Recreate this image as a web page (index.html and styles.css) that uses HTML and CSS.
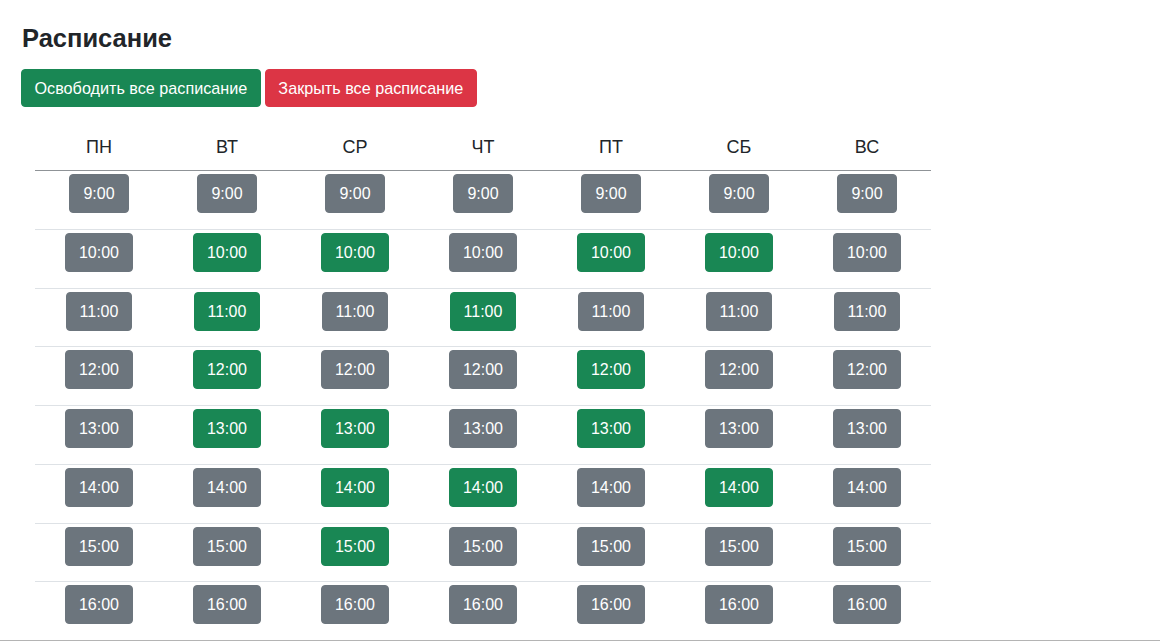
FILE: index.html
```html
<!DOCTYPE html>
<html lang="ru">
<head>
<meta charset="utf-8">
<title>Расписание</title>
<link rel="stylesheet" href="styles.css">
</head>
<body>
<div class="page">
  <h1 class="title">Расписание</h1>
  <div class="actions">
    <button class="btn btn-success">Освободить все расписание</button>
    <button class="btn btn-danger">Закрыть все расписание</button>
  </div>
  <table class="schedule">
    <thead>
      <tr><th>ПН</th><th>ВТ</th><th>СР</th><th>ЧТ</th><th>ПТ</th><th>СБ</th><th>ВС</th></tr>
    </thead>
    <tbody>
      <tr>
        <td><button class="slot">9:00</button></td>
        <td><button class="slot">9:00</button></td>
        <td><button class="slot">9:00</button></td>
        <td><button class="slot">9:00</button></td>
        <td><button class="slot">9:00</button></td>
        <td><button class="slot">9:00</button></td>
        <td><button class="slot">9:00</button></td>
      </tr>
      <tr>
        <td><button class="slot">10:00</button></td>
        <td><button class="slot free">10:00</button></td>
        <td><button class="slot free">10:00</button></td>
        <td><button class="slot">10:00</button></td>
        <td><button class="slot free">10:00</button></td>
        <td><button class="slot free">10:00</button></td>
        <td><button class="slot">10:00</button></td>
      </tr>
      <tr>
        <td><button class="slot">11:00</button></td>
        <td><button class="slot free">11:00</button></td>
        <td><button class="slot">11:00</button></td>
        <td><button class="slot free">11:00</button></td>
        <td><button class="slot">11:00</button></td>
        <td><button class="slot">11:00</button></td>
        <td><button class="slot">11:00</button></td>
      </tr>
      <tr>
        <td><button class="slot">12:00</button></td>
        <td><button class="slot free">12:00</button></td>
        <td><button class="slot">12:00</button></td>
        <td><button class="slot">12:00</button></td>
        <td><button class="slot free">12:00</button></td>
        <td><button class="slot">12:00</button></td>
        <td><button class="slot">12:00</button></td>
      </tr>
      <tr>
        <td><button class="slot">13:00</button></td>
        <td><button class="slot free">13:00</button></td>
        <td><button class="slot free">13:00</button></td>
        <td><button class="slot">13:00</button></td>
        <td><button class="slot free">13:00</button></td>
        <td><button class="slot">13:00</button></td>
        <td><button class="slot">13:00</button></td>
      </tr>
      <tr>
        <td><button class="slot">14:00</button></td>
        <td><button class="slot">14:00</button></td>
        <td><button class="slot free">14:00</button></td>
        <td><button class="slot free">14:00</button></td>
        <td><button class="slot">14:00</button></td>
        <td><button class="slot free">14:00</button></td>
        <td><button class="slot">14:00</button></td>
      </tr>
      <tr>
        <td><button class="slot">15:00</button></td>
        <td><button class="slot">15:00</button></td>
        <td><button class="slot free">15:00</button></td>
        <td><button class="slot">15:00</button></td>
        <td><button class="slot">15:00</button></td>
        <td><button class="slot">15:00</button></td>
        <td><button class="slot">15:00</button></td>
      </tr>
      <tr>
        <td><button class="slot">16:00</button></td>
        <td><button class="slot">16:00</button></td>
        <td><button class="slot">16:00</button></td>
        <td><button class="slot">16:00</button></td>
        <td><button class="slot">16:00</button></td>
        <td><button class="slot">16:00</button></td>
        <td><button class="slot">16:00</button></td>
      </tr>
    </tbody>
  </table>
</div>
<div class="frame-edge"></div>
</body>
</html>
```

FILE: styles.css
```css
* { box-sizing: border-box; }

html, body {
  margin: 0;
  padding: 0;
  background: #fff;
  color: #212529;
  font-family: "Liberation Sans", Arial, sans-serif;
  overflow: hidden;
}

.page {
  padding: 24px 21px 0 21px;
}

.title {
  margin: 0 0 16px 1px;
  font-size: 25.5px;
  line-height: 29px;
  font-weight: 700;
}

.actions {
  display: flex;
  gap: 4px;
}

.btn {
  font-family: inherit;
  font-size: 16.2px;
  line-height: 24px;
  padding: 6px 12.5px;
  border: 1px solid transparent;
  border-radius: 4px;
  color: #fff;
  cursor: pointer;
}

.btn-success { background: #198754; border-color: #198754; }
.btn-danger { background: #dc3545; border-color: #dc3545; }

.schedule {
  margin: 20px 0 0 14px;
  width: 896px;
  border-collapse: collapse;
  table-layout: fixed;
}

.schedule th {
  font-weight: 400;
  font-size: 18px;
  line-height: 27px;
  padding: 7px 4px 9px 4px;
  text-align: center;
  border-bottom: 1px solid #8f9397;
}

.schedule td {
  text-align: center;
  padding: 3px 4px 15.75px 4px;
  border-top: 1px solid #dee2e6;
}

.schedule tbody tr:first-child td {
  border-top: none;
}

.slot {
  font-family: inherit;
  font-size: 16px;
  line-height: 25px;
  padding: 6px 13px;
  border: 1px solid #6c757d;
  border-radius: 4px;
  background: #6c757d;
  color: #fff;
  cursor: pointer;
}

.slot.free {
  background: #198754;
  border-color: #198754;
}

.frame-edge {
  position: fixed;
  left: 0;
  right: 0;
  bottom: 0;
  height: 1px;
  background: #b4b4b4;
}
```
